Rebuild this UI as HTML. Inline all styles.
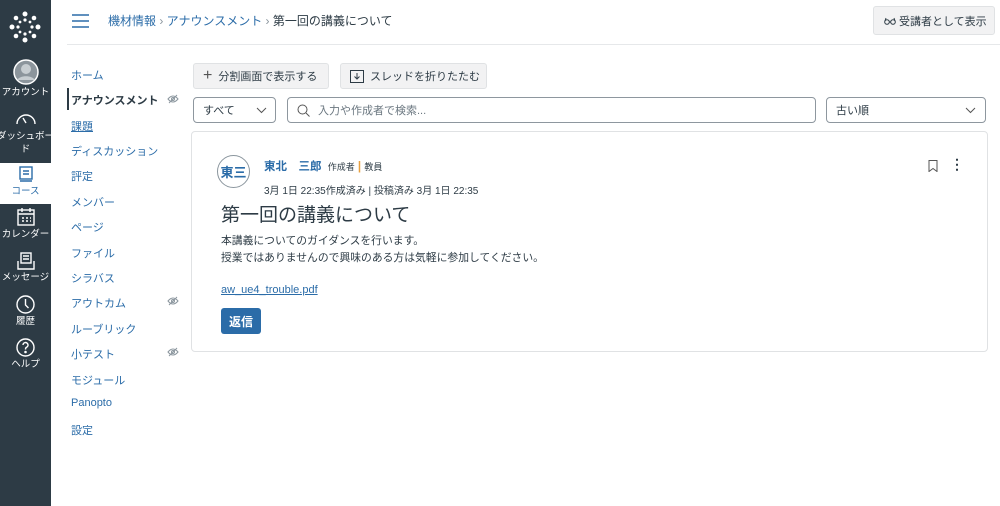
<!DOCTYPE html>
<html><head><meta charset="utf-8"><style>
*{box-sizing:border-box;margin:0;padding:0}
body{width:1000px;height:506px;overflow:hidden;background:#fff;font-family:"Liberation Sans","Noto Sans CJK JP",sans-serif;color:#2d3b45;position:relative}
.side{position:absolute;left:0;top:0;width:51px;height:506px;background:#2d3b45;overflow:hidden}
.ni{position:absolute;left:-10px;width:71px;text-align:center;color:#fff;font-size:9.5px;line-height:12px;white-space:nowrap}
.ni svg{display:block;margin:0 auto}
.a{position:absolute;white-space:nowrap}
.crumb{font-size:12px;color:#2b6ca8;top:12px}
.cn{position:absolute;left:71px;font-size:11px;color:#2b6ca8;white-space:nowrap}
.btn{position:absolute;background:#f2f2f3;border:1px solid #e0e2e4;border-radius:3px;font-size:11px;color:#2d3b45;display:flex;align-items:center;padding-left:9px;white-space:nowrap}
.inp{position:absolute;border:1px solid #8e979f;border-radius:4px;background:#fff;font-size:11px;display:flex;align-items:center;padding-left:9px;white-space:nowrap}
.eye{position:absolute;left:167px;width:12px;height:10px}
</style></head><body>
<div class="side">
 <svg style="position:absolute;left:8px;top:10px" width="34" height="34" viewBox="0 0 34 34" fill="#fff">
  <circle cx="17" cy="4" r="2.5"/><circle cx="17" cy="30" r="2.5"/><circle cx="4" cy="17" r="2.5"/><circle cx="30" cy="17" r="2.5"/>
  <circle cx="8" cy="8" r="2.3"/><circle cx="26" cy="8" r="2.3"/><circle cx="8" cy="26" r="2.3"/><circle cx="26" cy="26" r="2.3"/>
  <circle cx="17" cy="10" r="1.6"/><circle cx="17" cy="24" r="1.6"/><circle cx="10" cy="17" r="1.6"/><circle cx="24" cy="17" r="1.6"/>
  <circle cx="12" cy="12" r="1.4"/><circle cx="22" cy="12" r="1.4"/><circle cx="12" cy="22" r="1.4"/><circle cx="22" cy="22" r="1.4"/>
 </svg>
 <div class="ni" style="top:59px"><svg width="26" height="26" viewBox="0 0 26 26"><circle cx="13" cy="13" r="12" fill="#8c959c" stroke="#fff" stroke-width="1.5"/><circle cx="13" cy="10" r="5" fill="#c7cdd1"/><path d="M4 21c3-5 15-5 18 0" fill="#c7cdd1"/></svg><div style="margin-top:2px">アカウント</div></div>
 <div class="ni" style="top:110px"><svg width="22" height="16" viewBox="0 0 22 16" fill="none" stroke="#fff" stroke-width="1.4"><path d="M2 14a9 9 0 1 1 18 0"/><path d="M11 13l-3-5"/></svg><div style="margin-top:4px;line-height:13px">ダッシュボー<br>ド</div></div>
 <div style="position:absolute;top:163px;left:0;width:51px;height:41px;background:#fff"></div>
 <div class="ni" style="top:166px;color:#2b6ca8"><svg width="14" height="17" viewBox="0 0 14 17" fill="none" stroke="#2b6ca8" stroke-width="1.4"><rect x="1" y="1" width="12" height="12"/><path d="M4 5h6M4 8h6M1 15h12"/></svg><div style="margin-top:3px">コース</div></div>
 <div class="ni" style="top:208px"><svg width="18" height="18" viewBox="0 0 18 18" fill="none" stroke="#fff" stroke-width="1.4"><rect x="1" y="2" width="16" height="15"/><path d="M1 6h16M5 0v4M13 0v4M5 10h2M9 10h2M13 10h1M5 13h2M9 13h2M13 13h1"/></svg><div style="margin-top:3px">カレンダー</div></div>
 <div class="ni" style="top:252px"><svg width="18" height="18" viewBox="0 0 18 18" fill="none" stroke="#fff" stroke-width="1.4"><rect x="4" y="1" width="10" height="10"/><path d="M6 4h6M6 7h6M1 9v8h16V9"/></svg><div style="margin-top:2px">メッセージ</div></div>
 <div class="ni" style="top:295px"><svg width="19" height="19" viewBox="0 0 19 19" fill="none" stroke="#fff" stroke-width="1.4"><circle cx="9.5" cy="9.5" r="8.5"/><path d="M9.5 4v6l3 3"/></svg><div style="margin-top:2px">履歴</div></div>
 <div class="ni" style="top:338px"><svg width="19" height="19" viewBox="0 0 19 19" fill="none" stroke="#fff" stroke-width="1.4"><circle cx="9.5" cy="9.5" r="8.5"/><path d="M7 7a2.5 2.5 0 1 1 3.5 2.3c-1 .4-1 1-1 2.2"/><circle cx="9.5" cy="14" r=".6" fill="#fff"/></svg><div style="margin-top:2px">ヘルプ</div></div>
</div>
<svg style="position:absolute;left:72px;top:14px" width="17" height="14" viewBox="0 0 17 14" stroke="#2b6ca8" stroke-width="1.6"><path d="M0 1h17M0 7h17M0 13h17"/></svg>
<div class="a crumb" style="left:108px">機材情報 <span style="color:#8b969e">›</span> アナウンスメント <span style="color:#8b969e">›</span> <span style="color:#2d3b45">第一回の講義について</span></div>
<div class="btn" style="left:873px;top:6px;width:122px;height:29px;font-size:11px;padding-left:10px"><svg width="12" height="8" viewBox="0 0 12 8" fill="none" stroke="#2d3b45" style="margin-right:3px"><circle cx="3" cy="5" r="2.3"/><circle cx="9" cy="5" r="2.3"/><path d="M5.3 5h1.4M1 4L2 1M11 4L10 1"/></svg>受講者として表示</div>
<div style="position:absolute;left:67px;top:44px;width:933px;height:1px;background:#e6e8ea"></div>

<div class="cn" style="top:67px">ホーム</div>
<div style="position:absolute;left:67px;top:88px;width:2px;height:22px;background:#2d3b45"></div>
<div class="cn" style="top:92px;color:#2d3b45;font-weight:bold">アナウンスメント</div>
<svg class="eye" style="top:94px" viewBox="0 0 12 10" fill="none" stroke="#8b969e"><path d="M1 5q5-6 10 0q-5 6-10 0z"/><circle cx="6" cy="5" r="1.5"/><path d="M2 9l8-8"/></svg>
<div class="cn" style="top:118px;text-decoration:underline">課題</div>
<div class="cn" style="top:143px">ディスカッション</div>
<div class="cn" style="top:168px">評定</div>
<div class="cn" style="top:194px">メンバー</div>
<div class="cn" style="top:219px">ページ</div>
<div class="cn" style="top:245px">ファイル</div>
<div class="cn" style="top:270px">シラバス</div>
<div class="cn" style="top:295px">アウトカム</div>
<svg class="eye" style="top:296px" viewBox="0 0 12 10" fill="none" stroke="#8b969e"><path d="M1 5q5-6 10 0q-5 6-10 0z"/><circle cx="6" cy="5" r="1.5"/><path d="M2 9l8-8"/></svg>
<div class="cn" style="top:321px">ルーブリック</div>
<div class="cn" style="top:346px">小テスト</div>
<svg class="eye" style="top:347px" viewBox="0 0 12 10" fill="none" stroke="#8b969e"><path d="M1 5q5-6 10 0q-5 6-10 0z"/><circle cx="6" cy="5" r="1.5"/><path d="M2 9l8-8"/></svg>
<div class="cn" style="top:372px">モジュール</div>
<div class="cn" style="top:397px">Panopto</div>
<div class="cn" style="top:422px">設定</div>

<div class="btn" style="left:193px;top:63px;width:136px;height:26px"><span style="font-size:16px;color:#555;margin-right:6px;font-weight:300">+</span>分割画面で表示する</div>
<div class="btn" style="left:340px;top:63px;width:147px;height:26px"><svg width="14" height="13" viewBox="0 0 14 13" fill="none" stroke="#2d3b45" style="margin-right:6px"><rect x=".5" y=".5" width="13" height="12"/><path d="M7 3v6M4.5 6.5L7 9l2.5-2.5"/></svg>スレッドを折りたたむ</div>
<div class="inp" style="left:193px;top:97px;width:83px;height:26px">すべて<svg style="position:absolute;right:8px;top:9px" width="11" height="7" viewBox="0 0 11 7" fill="none" stroke="#555"><path d="M1 1l4.5 4.5L10 1"/></svg></div>
<div class="inp" style="left:287px;top:97px;width:529px;height:26px;color:#6b7780"><svg width="13" height="13" viewBox="0 0 13 13" fill="none" stroke="#555" style="margin-right:8px"><circle cx="5.5" cy="5.5" r="4.5"/><path d="M9 9l3.5 3.5"/></svg>入力や作成者で検索...</div>
<div class="inp" style="left:826px;top:97px;width:160px;height:26px">古い順<svg style="position:absolute;right:9px;top:9px" width="11" height="7" viewBox="0 0 11 7" fill="none" stroke="#555"><path d="M1 1l4.5 4.5L10 1"/></svg></div>

<div style="position:absolute;left:191px;top:131px;width:797px;height:221px;border:1px solid #e0e2e4;border-radius:4px"></div>
<div style="position:absolute;left:217px;top:155px;width:33px;height:33px;border:1.5px solid #8b969e;border-radius:50%;color:#2b6ca8;font-weight:bold;font-size:13px;display:flex;align-items:center;justify-content:center">東三</div>
<div class="a" style="left:264px;top:158px;font-size:11.5px;color:#2b6ca8;font-weight:bold">東北　三郎 <span style="font-size:9px;color:#2d3b45;font-weight:normal;margin-left:3px">作成者</span> <span style="color:#e8a040">|</span> <span style="font-size:9px;color:#2d3b45;font-weight:normal">教員</span></div>
<div class="a" style="left:264px;top:182px;font-size:10px">3月 1日 22:35作成済み | 投稿済み 3月 1日 22:35</div>
<svg style="position:absolute;left:928px;top:160px" width="10" height="12" viewBox="0 0 10 12" fill="none" stroke="#555"><path d="M1 .5h8v11L5 8.5 1 11.5z"/></svg>
<div class="a" style="left:950px;top:157px;font-size:14px;font-weight:bold;line-height:14px">⋮</div>
<div class="a" style="left:221px;top:200px;font-size:19px">第一回の講義について</div>
<div class="a" style="left:221px;top:233px;font-size:10.8px;line-height:17px">本講義についてのガイダンスを行います。<br>授業ではありませんので興味のある方は気軽に参加してください。</div>
<div class="a" style="left:221px;top:284px;font-size:11px;color:#2b6ca8;text-decoration:underline">aw_ue4_trouble.pdf</div>
<div style="position:absolute;left:221px;top:308px;width:40px;height:26px;background:#2b6ca8;border-radius:3px;color:#fff;font-size:12px;font-weight:bold;display:flex;align-items:center;justify-content:center">返信</div>
</body></html>
